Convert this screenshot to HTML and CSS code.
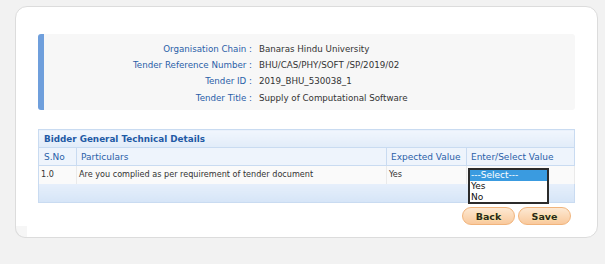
FILE: index.html
```html
<!DOCTYPE html>
<html lang="en">
<head>
    <meta charset="UTF-8">
    <title>Bidder General Technical Details</title>
    <link rel="stylesheet" href="styles.css">
</head>
<body>

    <div class="page-card">

        <!-- Dados do tender -->
        <div class="tender-info">
            <div class="info-label">Organisation Chain :</div>
            <div class="info-value">Banaras Hindu University</div>

            <div class="info-label">Tender Reference Number :</div>
            <div class="info-value">BHU/CAS/PHY/SOFT /SP/2019/02</div>

            <div class="info-label">Tender ID :</div>
            <div class="info-value">2019_BHU_530038_1</div>

            <div class="info-label">Tender Title :</div>
            <div class="info-value">Supply of Computational Software</div>
        </div>

        <!-- Tabela de detalhes -->
        <table class="details-table">
            <colgroup>
                <col class="col-sno">
                <col class="col-part">
                <col class="col-exp">
                <col class="col-enter">
            </colgroup>
            <tr class="table-title">
                <th colspan="4">Bidder General Technical Details</th>
            </tr>
            <tr class="table-head">
                <th class="th-sno">S.No</th>
                <th>Particulars</th>
                <th>Expected Value</th>
                <th>Enter/Select Value</th>
            </tr>
            <tr class="table-row">
                <td>1.0</td>
                <td>Are you complied as per requirement of tender document</td>
                <td>Yes</td>
                <td class="select-cell">
                    <div class="listbox">
                        <div class="listbox-option selected">---Select---</div>
                        <div class="listbox-option">Yes</div>
                        <div class="listbox-option">No</div>
                    </div>
                </td>
            </tr>
            <tr class="table-foot">
                <td colspan="4"></td>
            </tr>
        </table>

        <div class="actions">
            <button class="action-button">Back</button>
            <button class="action-button">Save</button>
        </div>
    </div>

</body>
</html>
```

FILE: styles.css
```css
/* --- Geral --- */
* {
    margin: 0;
    padding: 0;
    box-sizing: border-box;
}

body {
    font-family: 'DejaVu Sans', Verdana, sans-serif;
    font-size: 8.5px;
    color: #333;
    background-color: #f2f2f2;
    padding: 6px 7px 26px 15px;
}

/* --- Cartão principal --- */
.page-card {
    position: relative;
    height: 232px;
    background-color: #fff;
    border: 1px solid #dcdcdc;
    border-radius: 12px;
    padding: 27px 22px 0 22px;
}
.page-card::after {
    content: "";
    position: absolute;
    left: -1px;
    bottom: -1px;
    width: 11px;
    height: 11px;
    background: #f6f6f6;
    border-left: 1px solid #dcdcdc;
    border-bottom: 1px solid #dcdcdc;
    border-bottom-left-radius: 10px;
}

/* --- Bloco de informações do tender --- */
.tender-info {
    display: grid;
    grid-template-columns: 208px 1fr;
    column-gap: 7px;
    background-color: #f7f7f7;
    border-left: 6px solid #6f9fdc;
    border-radius: 3px;
    padding: 6.5px 0 4px 0;
    font-size: 8.7px;
    line-height: 16.4px;
}
.info-label {
    color: #2a60a8;
    text-align: right;
}
.info-value {
    color: #333;
}

/* --- Tabela --- */
.details-table {
    width: 100%;
    margin-top: 19px;
    border-collapse: collapse;
    border: 1px solid #c9dbf1;
    table-layout: fixed;
}
.col-sno { width: 38px; }
.col-exp { width: 80px; }
.col-enter { width: 108px; }

.table-title th {
    height: 18px;
    text-align: left;
    padding: 1px 5px 0 5px;
    font-size: 8.8px;
    font-weight: bold;
    color: #1f5aa5;
    background: linear-gradient(#f1f6fd, #e1ecf9);
    border-bottom: 1px solid #c9dbf1;
}

.table-head th {
    height: 18px;
    text-align: left;
    font-weight: normal;
    font-size: 9px;
    color: #2a60a8;
    background-color: #eef4fc;
    padding: 1px 4px 0 4px;
    border: 1px solid #c9dbf1;
}
.table-head .th-sno {
    padding-left: 5px;
}

.table-row td {
    height: 18px;
    padding: 0 2px 1px 2px;
    font-size: 8.1px;
    color: #333;
    background-color: #fafafa;
    border-right: 1px solid #eaeaea;
}

.table-foot td {
    height: 19px;
    background: linear-gradient(#e6effb, #d6e5f7);
}

/* --- Lista de seleção (aberta) --- */
.select-cell {
    position: relative;
}
.listbox {
    position: absolute;
    top: 2px;
    left: 1px;
    width: 81px;
    background-color: #fff;
    border: 2px solid #2b2b2b;
    z-index: 10;
    font-size: 9px;
}
.listbox-option {
    height: 10.7px;
    line-height: 10.7px;
    padding-left: 1px;
    color: #111;
}
.listbox-option.selected {
    background-color: #3a9be0;
    color: #fff;
}

/* --- Botões --- */
.actions {
    display: flex;
    justify-content: flex-end;
    gap: 3px;
    padding: 4px 4px 0 0;
}
.action-button {
    width: 53px;
    height: 18px;
    font-family: 'DejaVu Sans', Verdana, sans-serif;
    font-size: 9.5px;
    font-weight: bold;
    color: #2a2a1a;
    text-shadow: 0 0 2px #fff59a;
    background: linear-gradient(#fde9d3, #f9c99c);
    border: 1px solid #f1b47c;
    border-radius: 9px;
    cursor: pointer;
}
```
